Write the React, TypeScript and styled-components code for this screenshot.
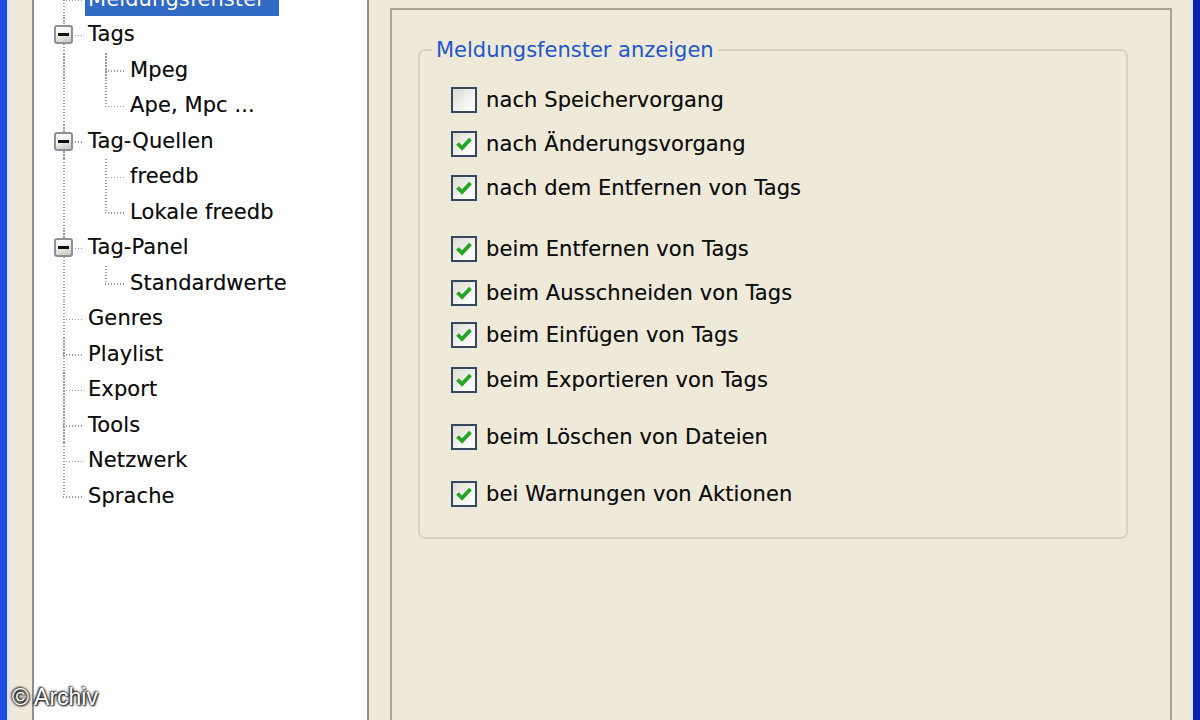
import React from 'react';
import styled, { createGlobalStyle } from 'styled-components';

const GlobalStyle = createGlobalStyle`
  html, body { margin: 0; padding: 0; height: 100%; overflow: hidden; }
  body { background: #eee9d9; font-family: "DejaVu Sans", Verdana, sans-serif; }
  #root { height: 100%; }
`;

const Window = styled.div`
  position: relative;
  display: flex;
  width: 1200px;
  height: 720px;
  overflow: hidden;
  background: #eee9d9;
`;

const Frame = styled.div<{ $side: 'left' | 'right' }>`
  flex: 0 0 10px;
  box-sizing: border-box;
  background: ${p => (p.$side === 'left' ? '#1d4fe2' : '#0a20ac')};
  ${p => (p.$side === 'left' ? 'border-right' : 'border-left')}: 3px solid #dde4f4;
`;

const TreePanel = styled.div`
  flex: 0 0 337px;
  box-sizing: border-box;
  margin-left: 22px;
  background: #ffffff;
  border-left: 2px solid #8f8f8f;
  border-right: 2px solid #8f8f8f;
  overflow: hidden;
`;

const TreeList = styled.div`
  margin-top: -18.5px;
  display: flex;
  flex-direction: column;
`;

const Row = styled.div`
  display: flex;
  align-items: stretch;
  height: 35.5px;
`;

type Vert = 'full' | 'top' | 'none';

const dotsV = 'repeating-linear-gradient(to bottom, #9a9a9a 0 1.5px, transparent 1.5px 3px)';
const dotsH = 'repeating-linear-gradient(to right, #9a9a9a 0 1.5px, transparent 1.5px 3px)';

const Guide = styled.div<{ $w: number; $x: number; $v: Vert; $h?: boolean }>`
  position: relative;
  flex: 0 0 ${p => p.$w}px;
  &::before {
    content: '';
    display: ${p => (p.$v === 'none' ? 'none' : 'block')};
    position: absolute;
    left: ${p => p.$x}px;
    top: 0;
    width: 1.5px;
    height: ${p => (p.$v === 'full' ? '100%' : '50%')};
    background: ${dotsV};
  }
  &::after {
    content: '';
    display: ${p => (p.$h ? 'block' : 'none')};
    position: absolute;
    left: ${p => p.$x}px;
    right: 0;
    top: 50%;
    height: 1.5px;
    background: ${dotsH};
  }
`;

const Expander = styled.div`
  position: absolute;
  z-index: 1;
  left: 20px;
  top: 8px;
  width: 19px;
  height: 19px;
  box-sizing: border-box;
  border: 2px solid #8d9196;
  border-radius: 3px;
  background: linear-gradient(160deg, #ffffff 0%, #f0efea 45%, #c9c6bc 100%);
  display: flex;
  align-items: center;
  justify-content: center;
  &::before {
    content: '';
    width: 11px;
    height: 3px;
    background: #111;
  }
`;

const Label = styled.span<{ $selected?: boolean }>`
  align-self: center;
  margin-left: 1px;
  padding: ${p => (p.$selected ? '0 14px 0 3px' : '0 3px')};
  height: 33px;
  line-height: 33px;
  font-size: 21px;
  letter-spacing: 0.1px;
  white-space: nowrap;
  color: ${p => (p.$selected ? '#ffffff' : '#0e0e0e')};
  background: ${p => (p.$selected ? '#316ac5' : 'transparent')};
  text-shadow: 0 0 0.6px rgba(0, 0, 0, 0.45);
`;

const SettingsPanel = styled.div`
  flex: 0 0 782px;
  box-sizing: border-box;
  margin-left: 21px;
  margin-right: 18px;
  margin-top: 8px;
  padding-left: 26px;
  border: 2px solid #a8a496;
  border-bottom: none;
`;

const Group = styled.fieldset`
  box-sizing: border-box;
  width: 710px;
  margin: 28px 0 0 0;
  padding: 23px 0 28px 12px;
  border: 2px solid #d6d2c1;
  border-radius: 7px;
  min-width: 0;
`;

const Legend = styled.legend`
  padding: 0 4px;
  font-size: 21px;
  line-height: 24px;
  color: #2157c9;
`;

const CheckList = styled.div`
  display: flex;
  flex-direction: column;
  margin-left: 19px;
`;

const CheckRow = styled.label<{ $gap: number }>`
  display: flex;
  align-items: center;
  gap: 9px;
  height: 30px;
  margin-top: ${p => p.$gap}px;
  font-size: 21px;
  letter-spacing: 0.1px;
  color: #0e0e0e;
  white-space: nowrap;
  text-shadow: 0 0 0.6px rgba(0, 0, 0, 0.45);
`;

const Box = styled.span<{ $checked: boolean }>`
  flex: 0 0 26px;
  width: 26px;
  height: 26px;
  box-sizing: border-box;
  border: 2px solid #34495f;
  background: ${p =>
    p.$checked
      ? 'linear-gradient(135deg, #dcdbd2 0%, #f4f4ef 60%, #ffffff 100%)'
      : 'linear-gradient(135deg, #d9d8d0 0%, #f2f2ee 55%, #ffffff 100%)'};
  display: flex;
  align-items: center;
  justify-content: center;
`;

const Watermark = styled.div`
  position: absolute;
  left: 12px;
  bottom: 9px;
  font-family: "Liberation Sans", Arial, sans-serif;
  font-size: 23px;
  color: #ffffff;
  text-shadow: 0 0 3px #000, 1px 1px 2px #000, -1px -1px 2px #333;
`;

const Check = () => (
  <svg width="22" height="22" viewBox="0 0 22 22">
    <path d="M4.5 10.5 L9 15 L17.5 6" fill="none" stroke="#25a525" strokeWidth="3.8" strokeLinejoin="miter" />
  </svg>
);

type Item = { text: string; level: 1 | 2; expander?: boolean; last?: boolean; selected?: boolean };

const items: Item[] = [
  { text: 'Meldungsfenster', level: 1, selected: true },
  { text: 'Tags', level: 1, expander: true },
  { text: 'Mpeg', level: 2 },
  { text: 'Ape, Mpc ...', level: 2, last: true },
  { text: 'Tag-Quellen', level: 1, expander: true },
  { text: 'freedb', level: 2 },
  { text: 'Lokale freedb', level: 2, last: true },
  { text: 'Tag-Panel', level: 1, expander: true },
  { text: 'Standardwerte', level: 2, last: true },
  { text: 'Genres', level: 1 },
  { text: 'Playlist', level: 1 },
  { text: 'Export', level: 1 },
  { text: 'Tools', level: 1 },
  { text: 'Netzwerk', level: 1 },
  { text: 'Sprache', level: 1, last: true },
];

const checks: { text: string; checked: boolean; gap: number }[] = [
  { text: 'nach Speichervorgang', checked: false, gap: 0 },
  { text: 'nach Änderungsvorgang', checked: true, gap: 14 },
  { text: 'nach dem Entfernen von Tags', checked: true, gap: 14 },
  { text: 'beim Entfernen von Tags', checked: true, gap: 31 },
  { text: 'beim Ausschneiden von Tags', checked: true, gap: 14 },
  { text: 'beim Einfügen von Tags', checked: true, gap: 12 },
  { text: 'beim Exportieren von Tags', checked: true, gap: 15 },
  { text: 'beim Löschen von Dateien', checked: true, gap: 27 },
  { text: 'bei Warnungen von Aktionen', checked: true, gap: 27 },
];

export default function App() {
  return (
    <>
      <GlobalStyle />
      <Window>
        <Frame $side="left" />
        <TreePanel>
          <TreeList>
            {items.map(it => (
              <Row key={it.text}>
                {it.level === 1 ? (
                  <Guide $w={50} $x={29} $v={it.last ? 'top' : 'full'} $h>
                    {it.expander && <Expander />}
                  </Guide>
                ) : (
                  <>
                    <Guide $w={50} $x={29} $v="full" />
                    <Guide $w={42} $x={21} $v={it.last ? 'top' : 'full'} $h />
                  </>
                )}
                <Label $selected={it.selected}>{it.text}</Label>
              </Row>
            ))}
          </TreeList>
        </TreePanel>
        <SettingsPanel>
          <Group>
            <Legend>Meldungsfenster anzeigen</Legend>
            <CheckList>
              {checks.map(c => (
                <CheckRow key={c.text} $gap={c.gap}>
                  <Box $checked={c.checked}>{c.checked && <Check />}</Box>
                  {c.text}
                </CheckRow>
              ))}
            </CheckList>
          </Group>
        </SettingsPanel>
        <Frame $side="right" />
        <Watermark>© Archiv</Watermark>
      </Window>
    </>
  );
}
